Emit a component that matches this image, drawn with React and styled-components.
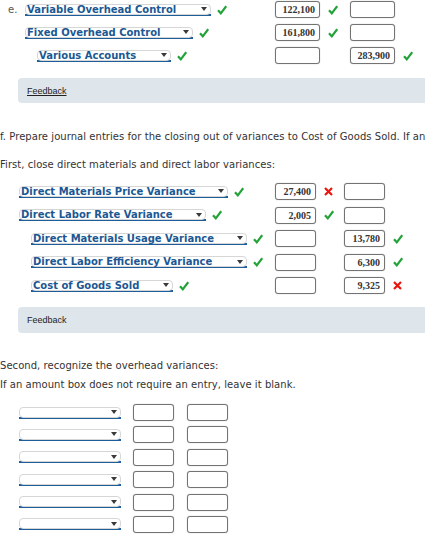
import React from "react";
import styled, { createGlobalStyle } from "styled-components";

const Global = createGlobalStyle`
  html, body { margin: 0; padding: 0; overflow: hidden; background: #fff; }
  body { font-family: "DejaVu Sans", Verdana, sans-serif; }
`;

const Page = styled.div`
  width: 425px;
  height: 541px;
  overflow: hidden;
  color: #333;
`;

const Table = styled.div`
  display: flex;
  flex-direction: column;
  gap: ${(p) => p.$gap}px;
  margin-top: ${(p) => p.$top || 0}px;
`;

const Row = styled.div`
  display: grid;
  grid-template-columns: ${(p) => p.$left}px ${(p) => p.$inw}px ${(p) => p.$slot}px ${(p) => p.$inw}px ${(p) => p.$slot}px;
  height: 19px;
  align-items: center;
`;

const AccountCell = styled.div`
  display: flex;
  align-items: center;
  padding-left: ${(p) => p.$indent}px;
  min-width: 0;
`;

const Letter = styled.span`
  width: 17px;
  font-size: 10px;
  color: #555;
  line-height: 12px;
`;

const SelectOuter = styled.div`
  box-sizing: border-box;
  width: ${(p) => p.$w}px;
  height: 12px;
  border-bottom: 2px solid #1d5e9a;
  flex: none;
`;

const SelectFace = styled.div`
  box-sizing: border-box;
  height: 11px;
  border: 1px solid #d6d6d6;
  border-radius: 4px;
  display: flex;
  align-items: center;
  justify-content: space-between;
  padding: 0 3px 0 1px;
`;

const SelectText = styled.span`
  font-size: 10px;
  font-weight: bold;
  line-height: 10px;
  color: #1b5893;
  white-space: nowrap;
  margin-top: 1px;
`;

const Caret = styled.span`
  width: 0;
  height: 0;
  border-left: 3px solid transparent;
  border-right: 3px solid transparent;
  border-top: 4px solid #3a3a3a;
  flex: none;
`;

const Amount = styled.div`
  box-sizing: border-box;
  height: 17px;
  border: 1px solid #737373;
  border-radius: 3px;
  box-shadow: 0 0 1px rgba(0, 0, 0, 0.4);
  background: #fff;
  font-family: "Liberation Serif", "Times New Roman", serif;
  font-weight: bold;
  font-size: 10px;
  color: #333;
  text-align: right;
  padding-right: 4px;
  line-height: 15px;
`;

const Slot = styled.div`
  display: flex;
  align-items: center;
  padding-left: ${(p) => p.$pad ?? 8}px;
`;

const MarkSvg = styled.svg`
  display: block;
  flex: none;
  margin-left: ${(p) => p.$ml || 0}px;
`;

const Check = ({ ml }) => (
  <MarkSvg $ml={ml} width="10" height="10" viewBox="0 0 10 10">
    <path d="M1 5.2 L3.8 8.3 L9.2 1.2" fill="none" stroke="#22a338" strokeWidth="2.2" strokeLinecap="butt" strokeLinejoin="miter" />
  </MarkSvg>
);

const Cross = () => (
  <MarkSvg width="9" height="9" viewBox="0 0 9 9">
    <path d="M1 1 L8 8 M8 1 L1 8" fill="none" stroke="#e8160e" strokeWidth="2.2" />
  </MarkSvg>
);

const Mark = ({ type }) => (type === "ok" ? <Check /> : type === "bad" ? <Cross /> : null);

const FeedbackBox = styled.div`
  margin: ${(p) => p.$top}px -10px 0 18px;
  height: ${(p) => p.$h}px;
  background: #dee5eb;
  border-radius: 4px;
  display: flex;
  align-items: center;
  padding-left: 9px;
`;

const FeedbackText = styled.span`
  font-family: "Liberation Sans", Arial, sans-serif;
  font-size: 9px;
  color: #222;
  text-decoration: ${(p) => (p.$link ? "underline" : "none")};
`;

const Para = styled.p`
  margin: ${(p) => p.$top}px 0 0 0;
  font-size: 10px;
  line-height: 12px;
  letter-spacing: 0.05px;
  color: #333;
  white-space: nowrap;
`;

const Select = ({ w, text }) => (
  <SelectOuter $w={w}>
    <SelectFace>
      <SelectText>{text}</SelectText>
      <Caret />
    </SelectFace>
  </SelectOuter>
);

const JournalRow = ({ left, inw, slot, indent, label, w, text, mark, a, aMark, b, bMark }) => (
  <Row $left={left} $inw={inw} $slot={slot}>
    <AccountCell $indent={indent}>
      {label && <Letter>{label}</Letter>}
      <Select w={w} text={text} />
      {mark && <Check ml={6} />}
    </AccountCell>
    <Amount>{a}</Amount>
    <Slot>
      <Mark type={aMark} />
    </Slot>
    <Amount>{b}</Amount>
    <Slot>
      <Mark type={bMark} />
    </Slot>
  </Row>
);

const sectionE = [
  { indent: 8, label: "e.", w: 186, text: "Variable Overhead Control", a: "122,100", aMark: "ok" },
  { indent: 25, w: 168, text: "Fixed Overhead Control", a: "161,800", aMark: "ok" },
  { indent: 37, w: 134, text: "Various Accounts", b: "283,900", bMark: "ok" },
];

const sectionF = [
  { indent: 19, w: 209, text: "Direct Materials Price Variance", a: "27,400", aMark: "bad" },
  { indent: 19, w: 187, text: "Direct Labor Rate Variance", a: "2,005", aMark: "ok" },
  { indent: 31, w: 216, text: "Direct Materials Usage Variance", b: "13,780", bMark: "ok" },
  { indent: 31, w: 216, text: "Direct Labor Efficiency Variance", b: "6,300", bMark: "ok" },
  { indent: 31, w: 142, text: "Cost of Goods Sold", b: "9,325", bMark: "bad" },
];

const EmptyRow = styled.div`
  display: grid;
  grid-template-columns: 133px 41px 13px 41px;
  height: 19px;
  align-items: center;
`;

export default function App() {
  return (
    <Page>
      <Global />
      <Table $gap={4}>
        {sectionE.map((r, i) => (
          <JournalRow key={i} left={275} inw={45} slot={30} mark {...r} />
        ))}
      </Table>
      <FeedbackBox $top={13} $h={25}>
        <FeedbackText $link>Feedback</FeedbackText>
      </FeedbackBox>
      <Para $top={28}>
        f. Prepare journal entries for the closing out of variances to Cost of Goods Sold. If an amount box does not require an entry, leave it blank.
      </Para>
      <Para $top={16}>First, close direct materials and direct labor variances:</Para>
      <Table $gap={4.5} $top={11}>
        {sectionF.map((r, i) => (
          <JournalRow key={i} left={275} inw={41} slot={28} mark {...r} />
        ))}
      </Table>
      <FeedbackBox $top={12} $h={26}>
        <FeedbackText>Feedback</FeedbackText>
      </FeedbackBox>
      <Para $top={27}>Second, recognize the overhead variances:</Para>
      <Para $top={7}>If an amount box does not require an entry, leave it blank.</Para>
      <Table $gap={3.4} $top={12}>
        {Array.from({ length: 6 }).map((_, i) => (
          <EmptyRow key={i}>
            <AccountCell $indent={19}>
              <Select w={102} text="" />
            </AccountCell>
            <Amount />
            <span />
            <Amount />
          </EmptyRow>
        ))}
      </Table>
    </Page>
  );
}
